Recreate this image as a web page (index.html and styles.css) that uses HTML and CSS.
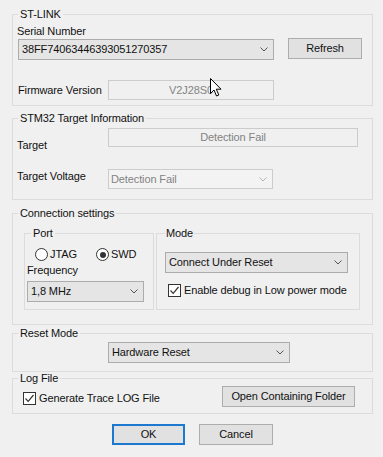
FILE: index.html
```html
<!DOCTYPE html>
<html>
<head>
<meta charset="utf-8">
<link rel="stylesheet" href="styles.css">
</head>
<body>
<div class="dlg">
  <fieldset class="grp g1">
    <legend>ST-LINK</legend>
    <div class="lbl">Serial Number</div>
    <div class="row r-serial">
      <div class="combo c-serial"><span>38FF74063446393051270357</span><svg class="chev" width="8" height="5" viewBox="0 0 8 5"><polyline points="0.5,0.5 4,4 7.5,0.5"/></svg></div>
      <button class="btn refresh">Refresh</button>
    </div>
    <div class="row r-fw">
      <span class="lbl wlbl">Firmware Version</span>
      <div class="field f-fw">V2J28S0</div>
    </div>
  </fieldset>

  <fieldset class="grp g2">
    <legend>STM32 Target Information</legend>
    <div class="row r-t1">
      <span class="lbl wlbl t1l">Target</span>
      <div class="field f-target">Detection Fail</div>
    </div>
    <div class="row r-t2">
      <span class="lbl wlbl t2l">Target Voltage</span>
      <div class="combo dis c-volt"><span>Detection Fail</span><svg class="chev" width="8" height="5" viewBox="0 0 8 5"><polyline points="0.5,0.5 4,4 7.5,0.5"/></svg></div>
    </div>
  </fieldset>

  <fieldset class="grp g3">
    <legend>Connection settings</legend>
    <div class="subs">
      <fieldset class="sub port">
        <legend>Port</legend>
        <div class="radios">
          <label class="ritem r-jtag"><span class="radio"></span><span class="rtxt">JTAG</span></label>
          <label class="ritem"><span class="radio on"></span><span class="rtxt">SWD</span></label>
        </div>
        <div class="lbl freq">Frequency</div>
        <div class="combo c-freq"><span>1,8 MHz</span><svg class="chev" width="8" height="5" viewBox="0 0 8 5"><polyline points="0.5,0.5 4,4 7.5,0.5"/></svg></div>
      </fieldset>
      <fieldset class="sub mode">
        <legend>Mode</legend>
        <div class="combo c-mode"><span>Connect Under Reset</span><svg class="chev" width="8" height="5" viewBox="0 0 8 5"><polyline points="0.5,0.5 4,4 7.5,0.5"/></svg></div>
        <label class="citem c-lp"><span class="cbox"><svg width="11" height="11" viewBox="0 0 11 11"><polyline points="1.5,5.5 4.2,8.3 9.5,2"/></svg></span><span class="ctxt">Enable debug in Low power mode</span></label>
      </fieldset>
    </div>
  </fieldset>

  <fieldset class="grp g4">
    <legend>Reset Mode</legend>
    <div class="combo c-reset"><span>Hardware Reset</span><svg class="chev" width="8" height="5" viewBox="0 0 8 5"><polyline points="0.5,0.5 4,4 7.5,0.5"/></svg></div>
  </fieldset>

  <fieldset class="grp g5">
    <legend>Log File</legend>
    <div class="row r-log">
      <label class="citem c-log"><span class="cbox"><svg width="11" height="11" viewBox="0 0 11 11"><polyline points="1.5,5.5 4.2,8.3 9.5,2"/></svg></span><span class="ctxt">Generate Trace LOG File</span></label>
      <button class="btn open">Open Containing Folder</button>
    </div>
  </fieldset>

  <div class="actions">
    <button class="btn ok">OK</button>
    <button class="btn cancel">Cancel</button>
  </div>

  <svg class="cursor" width="14" height="20" viewBox="0 0 14 20"><polygon points="0.5,0.5 0.5,15.5 4,12 6.5,18 8.8,17 6.3,11.2 11,11.2"/></svg>
</div>
</body>
</html>
```

FILE: styles.css
```css
* { box-sizing: border-box; }
html, body { margin: 0; padding: 0; }
body {
  width: 383px;
  height: 457px;
  overflow: hidden;
  background: #f0f0f0;
  font: 11px/13px "Liberation Sans", Arial, sans-serif;
  letter-spacing: -0.12px;
  color: #111;
}
.dlg { position: relative; padding: 8px 0 0 12px; }

.grp, .sub {
  margin: 0;
  min-width: 0;
  border: 1px solid #dcdcdc;
}
.grp { width: 361px; padding: 0 4px; }
.grp > legend { padding: 0 2px; margin-left: 1px; line-height: 13px; }

.row { display: flex; align-items: flex-start; }
.lbl { white-space: nowrap; }
.wlbl { width: 91px; flex: none; }

.combo {
  display: flex;
  align-items: center;
  justify-content: space-between;
  height: 21px;
  padding: 0 5px 0 3px;
  border: 1px solid #acacac;
  background: #e5e5e5;
  white-space: nowrap;
  flex: none;
}
.chev { flex: none; }
.chev polyline { fill: none; stroke: #555; stroke-width: 1; }
.combo.dis { border-color: #cccccc; background: #f3f3f3; color: #838383; padding-left: 2px; height: 20px; }
.combo.dis .chev polyline { stroke: #b5b5b5; }

.field {
  height: 19px;
  line-height: 17px;
  border: 1px solid #cccccc;
  background: #f0f0f0;
  color: #838383;
  text-align: center;
  flex: none;
}

.btn {
  height: 21px;
  padding: 0;
  border: 1px solid #adadad;
  background: #e1e1e1;
  font: 11px/13px "Liberation Sans", Arial, sans-serif;
  letter-spacing: -0.12px;
  color: #111;
  flex: none;
}

/* group 1 */
.g1 { padding-top: 4px; padding-bottom: 5px; }
.c-serial { width: 256px; margin: 1px 0 0 1px; }
.refresh { width: 74px; margin-left: 14px; }
.r-fw { align-items: center; margin-top: 20px; }
.r-fw .wlbl { padding-left: 1px; }
.f-fw { width: 166px; height: 20px; line-height: 18px; }

/* group 2 */
.g2 { margin-top: 6px; padding-bottom: 10px; }
.t1l { margin-top: 14px; }
.f-target { width: 250px; margin-top: 3px; }
.t2l { margin-top: 18px; }
.c-volt { width: 165px; margin-top: 17px; }

/* group 3 */
.g3 { margin-top: 7px; padding-top: 7px; padding-bottom: 14px; }
.subs { display: flex; gap: 2px; margin-left: 7px; align-items: stretch; }
.port { width: 130px; padding: 8px 2px 7px 2px; }
.port > legend { margin-left: 4px; padding: 0 2px; line-height: 13px; }
.mode { width: 204px; padding: 12px 8px 0 8px; }
.mode > legend { padding: 0 1px; line-height: 13px; }

.radios { display: flex; height: 13px; margin-left: 8px; }
.ritem { display: flex; align-items: center; }
.r-jtag { width: 61px; }
.radio {
  width: 13px; height: 13px;
  border: 1px solid #333;
  border-radius: 50%;
  background: #fff;
  position: relative;
  flex: none;
}
.radio.on::after {
  content: "";
  position: absolute;
  left: 2.5px; top: 2.5px;
  width: 6px; height: 6px;
  border-radius: 50%;
  background: #333;
}
.rtxt { margin-left: 2px; }
.freq { margin-top: 3px; }
.c-freq { width: 117px; margin-top: 4px; }

.c-mode { width: 183px; }
.citem { display: flex; align-items: center; }
.cbox {
  width: 13px; height: 13px;
  border: 1px solid #333;
  background: #fff;
  flex: none;
  display: flex;
}
.cbox polyline { fill: none; stroke: #333; stroke-width: 1.2; }
.ctxt { margin-left: 3px; white-space: nowrap; }
.c-lp { margin: 11px 0 0 3px; }

/* group 4 */
.g4 { margin-top: 2px; padding-top: 2px; padding-bottom: 8px; }
.c-reset { width: 182px; margin-left: 91px; }

/* group 5 */
.g5 { padding: 1px 17px 6px 4px; }
.c-log { margin: 6px 0 0 6px; }
.open { width: 133px; margin-left: auto; }

/* actions */
.actions { display: flex; justify-content: center; gap: 14px; width: 361px; margin-top: 10px; }
.ok { width: 73px; border: 2px solid #1c79cf; }
.cancel { width: 74px; }

.cursor { position: absolute; left: 210px; top: 78px; }
.cursor polygon { fill: #fff; stroke: #000; stroke-width: 1; stroke-linejoin: miter; }
```
